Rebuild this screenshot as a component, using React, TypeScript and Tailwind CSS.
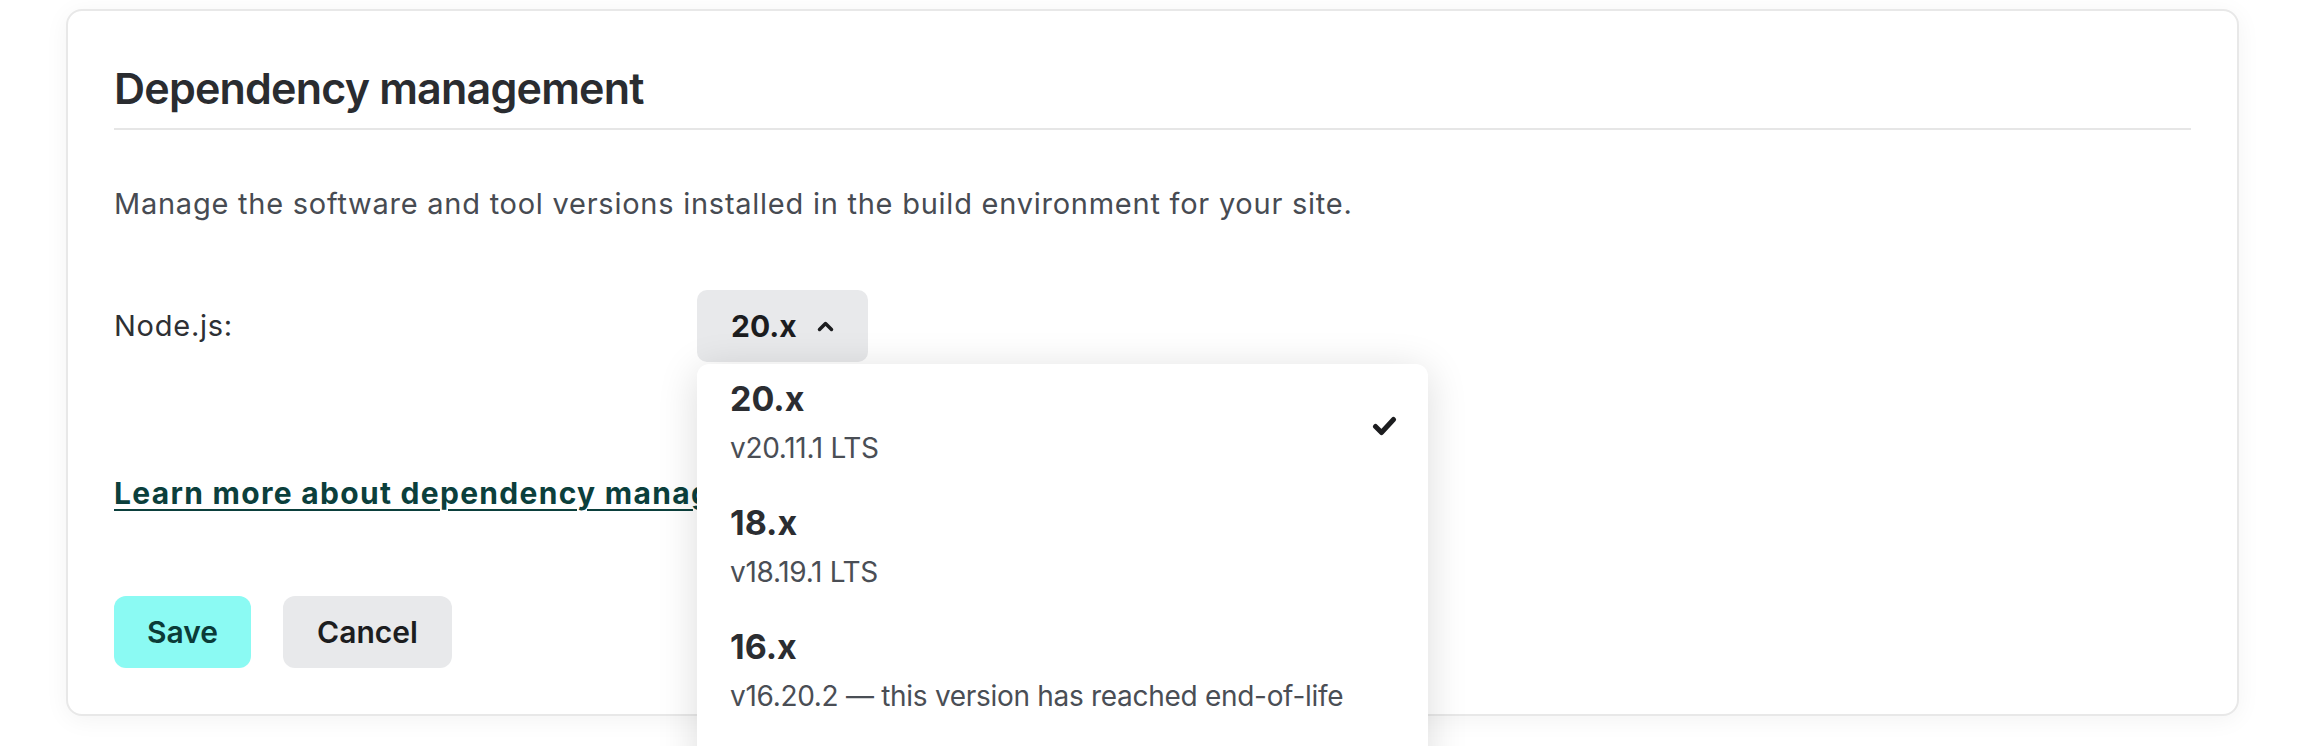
import React from 'react'

type Version = { name: string; detail: string; selected?: boolean }

const versions: Version[] = [
  { name: '20.x', detail: 'v20.11.1 LTS', selected: true },
  { name: '18.x', detail: 'v18.19.1 LTS' },
  { name: '16.x', detail: 'v16.20.2 — this version has reached end-of-life' },
]

const ChevronUp = () => (
  <svg width="17" height="11" viewBox="0 0 17 11" fill="none" aria-hidden="true">
    <polyline points="2.5,8.5 8.5,2.5 14.5,8.5" stroke="#1c1d1f" strokeWidth="3.5" strokeLinecap="round" strokeLinejoin="round" />
  </svg>
)

const Check = () => (
  <svg width="25" height="20" viewBox="0 0 25 20" fill="none" aria-hidden="true">
    <path d="M3.5 10.5 L9.5 16.5 L21.5 3.5" stroke="#1c1d1f" strokeWidth="5" strokeLinecap="round" strokeLinejoin="round" />
  </svg>
)

const App: React.FC = () => {
  return (
    <div className="h-screen overflow-hidden bg-white pt-[9px] pl-[66px] font-['Inter',sans-serif]">
      <section className="relative w-[2173px] rounded-[16px] border-2 border-[#e8e8e8] bg-white px-[46px] pt-[51px] pb-[46px] shadow-[0_4px_24px_rgba(0,0,0,0.05)]">
        <h2 className="border-b-2 border-[#e6e6e6] pb-[14px] text-[43px] leading-[52px] font-semibold tracking-[-0.8px] text-[#2a2c30]">
          Dependency management
        </h2>

        <p className="mt-[54px] text-[29px] leading-[40px] tracking-[0.75px] text-[#474b52]">
          Manage the software and tool versions installed in the build environment for your site.
        </p>

        {/* Node.js version select */}
        <div className="mt-[66px] flex items-center">
          <span className="w-[583px] text-[29px] leading-[40px] tracking-[0.75px] text-[#2e3034]">Node.js:</span>
          <div className="relative">
            <button className="flex h-[72px] items-center gap-[20px] rounded-[10px] bg-[#e8e9eb] px-[34px] text-[30px] font-bold text-[#1c1d1f]">
              20.x
              <ChevronUp />
            </button>

            <ul className="absolute left-0 top-[74px] z-10 w-[731px] rounded-[12px] bg-white pb-[40px] shadow-[0_6px_40px_rgba(0,0,0,0.14)]">
              {versions.map((v) => (
                <li key={v.name} className="flex items-center justify-between pt-[13px] pb-[21px] pl-[33px] pr-[31px]">
                  <div>
                    <div className="text-[34px] leading-[44px] font-bold text-[#2b2d31]">{v.name}</div>
                    <div className="mt-[8px] text-[28px] leading-[38px] tracking-[-0.3px] text-[#4a4e55]">{v.detail}</div>
                  </div>
                  {v.selected && (
                    <span className="mt-[8px]">
                      <Check />
                    </span>
                  )}
                </li>
              ))}
            </ul>
          </div>
        </div>

        <a
          href="#"
          className="mt-[111px] inline-block text-[30px] leading-[40px] font-bold tracking-[1.3px] text-[#0b3f3c] underline decoration-2 underline-offset-[5px]"
        >
          Learn more about dependency management
        </a>

        <div className="mt-[83px] flex gap-[32px]">
          <button className="h-[72px] w-[137px] rounded-[12px] bg-[#8bfaf3] text-[30px] font-semibold text-[#0b3b38]">
            Save
          </button>
          <button className="h-[72px] w-[169px] rounded-[12px] bg-[#e8e9eb] text-[30px] font-semibold text-[#1c1d1f]">
            Cancel
          </button>
        </div>
      </section>
    </div>
  )
}

export default App
